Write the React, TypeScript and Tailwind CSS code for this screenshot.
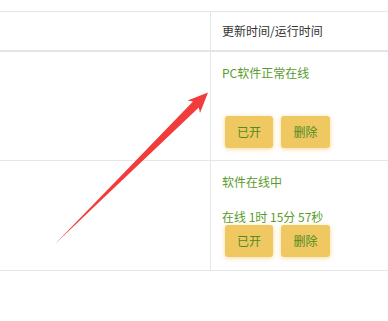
export default function App() {
  const rows = [
    { lines: ["PC软件正常在线", "", ""], h: "h-[109px]" },
    { lines: ["软件在线中", "", "在线 1时 15分 57秒"], h: "h-[110px]" },
  ];

  return (
    <div
      className="relative w-[388px] h-[321px] overflow-hidden bg-white text-[12px]"
      style={{ fontFamily: '"Noto Sans CJK SC", "Noto Sans", sans-serif' }}
    >
      <div className="pt-[11px]">
        {/* Header */}
        <div className="flex h-[41px] border-t border-b-2 border-[#e6e6e6] border-b-[#e2e4ea]">
          <div className="w-[211px] shrink-0 border-r border-[#e6e6e6]" />
          <div className="flex items-center pl-[11px] text-[#333]">更新时间/运行时间</div>
        </div>

        {/* Rows */}
        {rows.map((row, i) => (
          <div key={i} className={`flex ${row.h} border-b border-[#e6e6e6]`}>
            <div className="w-[211px] shrink-0 border-r border-[#e6e6e6]" />
            <div className="flex flex-col pl-[11px] pt-[12px]">
              {row.lines.map((line, j) => (
                <div key={j} className="h-[17.5px] leading-[17.5px] text-[#5a9b2c] whitespace-nowrap">
                  {line}
                </div>
              ))}
              <div className="flex gap-[8px] pl-[3px] -mt-[1px]">
                <button className="w-[48px] h-[32px] rounded-[3px] bg-[#f0c862] text-[#4f8c22] shadow-[0_1px_5px_rgba(235,190,70,0.55)]">
                  已开
                </button>
                <button className="w-[49px] h-[32px] rounded-[3px] bg-[#f0c862] text-[#4f8c22] shadow-[0_1px_5px_rgba(235,190,70,0.55)]">
                  删除
                </button>
              </div>
            </div>
          </div>
        ))}
      </div>

      {/* Annotation arrow */}
      <svg className="absolute left-0 top-0 pointer-events-none" width="388" height="321">
        <polygon
          points="55,244 198.8,107.4 200,113 208,92.5 187.6,100.4 193,101.6"
          fill="#f23b3b"
        />
      </svg>
    </div>
  );
}
